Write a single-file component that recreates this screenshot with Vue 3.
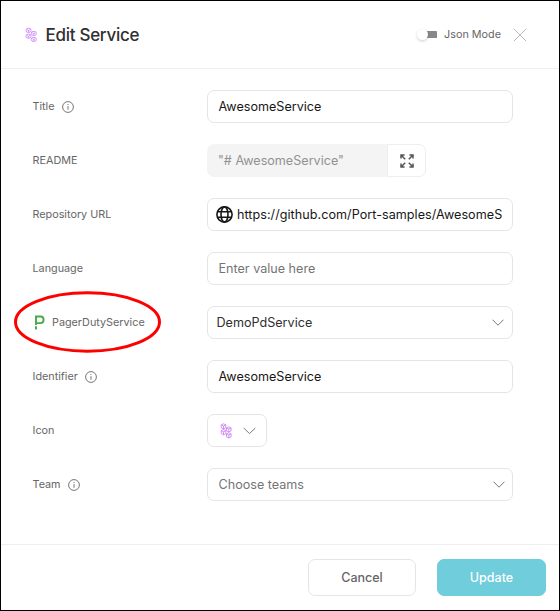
<script setup>
const cubes = [[4, 3.4], [9.3, 6.4], [4, 9.2], [9.3, 12.4]]
const rows = [
  { label: 'Title', info: true, type: 'text', value: 'AwesomeService' },
  { label: 'README', type: 'readme', value: '"# AwesomeService"' },
  { label: 'Repository URL', type: 'url', value: 'https://github.com/Port-samples/AwesomeS' },
  { label: 'Language', type: 'text', value: 'Enter value here', tone: 'placeholder' },
  { label: 'PagerDutyService', pager: true, type: 'select', value: 'DemoPdService', tone: 'chosen' },
  { label: 'Identifier', info: true, type: 'text', value: 'AwesomeService' },
  { label: 'Icon', type: 'icon' },
  { label: 'Team', info: true, type: 'select', value: 'Choose teams', tone: 'muted' },
]
</script>

<template>
  <main class="dialog">
    <header class="header">
      <svg class="service-icon" width="13" height="16" viewBox="0 0 13 16">
        <g v-for="c in cubes" :key="c[0] + '-' + c[1]" :transform="`translate(${c[0] - 0.5} ${c[1]})`">
          <ellipse rx="2.6" ry="2.1" />
          <path d="M-1.4-.7 0 .1 1.4-.7M0 .1V1.5" />
        </g>
      </svg>
      <h1>Edit Service</h1>
      <div class="mode"><span class="toggle"><i></i></span><span class="mode-label">Json Mode</span></div>
      <svg class="close" width="14" height="14" viewBox="0 0 14 14"><path d="m.8.8 12.4 12.4M13.2.8.8 13.2" /></svg>
    </header>

    <section class="form">
      <div v-for="row in rows" :key="row.label" class="row">
        <div class="label" :class="{ pager: row.pager }">
          <svg v-if="row.pager" class="pager-icon" width="11" height="15" viewBox="0 0 11 15">
            <path d="M2 9.900V1.500H6.500Q9.600 1.500 9.600 4.800T6.500 8.100H2M2 11.200V14.500" />
          </svg>
          <span>{{ row.label }}</span>
          <svg v-if="row.info" class="info" width="12" height="12" viewBox="0 0 12 12">
            <circle cx="6" cy="6" r="5.4" /><path d="M6 5.1v3.7" /><circle class="dot" cx="6" cy="3.5" r=".6" />
          </svg>
        </div>

        <div v-if="row.type === 'readme'" class="readme">
          <div class="readme-value">{{ row.value }}</div>
          <div class="expand">
            <svg width="14" height="14" viewBox="0 0 14 14">
              <path d="M5.2 5.2 1.5 1.5M8.8 5.2l3.7-3.7M5.2 8.8l-3.7 3.7M8.8 8.8l3.7 3.7M1 4.6V1h3.6M9.4 1H13v3.6M1 9.4V13h3.6M13 9.4V13H9.4" />
            </svg>
          </div>
        </div>
        <div v-else-if="row.type === 'icon'" class="field icon-field">
          <svg class="service-icon" width="13" height="16" viewBox="0 0 13 16">
            <g v-for="c in cubes" :key="c[0] + '-' + c[1]" :transform="`translate(${c[0] - 0.5} ${c[1]})`">
              <path d="M0-2.6 2.3-1.5V1.4L0 2.6-2.3 1.4V-1.5ZM-2.3-1.5 0-.4 2.3-1.5M0-.4V2.6" />
            </g>
          </svg>
          <svg class="chevron" width="13" height="8" viewBox="0 0 13 8"><path d="m.7 1 5.8 5.6L12.3 1" /></svg>
        </div>
        <div v-else class="field" :class="[row.type, row.tone]">
          <svg v-if="row.type === 'url'" class="globe" width="17" height="17" viewBox="0 0 17 17">
            <circle cx="8.5" cy="8.5" r="7.6" /><ellipse cx="8.5" cy="8.5" rx="3.5" ry="7.6" /><path d="M1.3 5.8h14.4M1.3 11.2h14.4" />
          </svg>
          <span class="value">{{ row.value }}</span>
          <svg v-if="row.type === 'select'" class="chevron" width="12" height="7" viewBox="0 0 12 7"><path d="M.5.7 6 6.2 11.5.7" /></svg>
        </div>
      </div>
    </section>

    <footer class="footer">
      <button class="cancel">Cancel</button>
      <button class="update">Update</button>
    </footer>
    <svg class="highlight" width="150" height="64" viewBox="0 0 150 64"><ellipse cx="74.5" cy="32" rx="72" ry="29.2" /></svg>
  </main>
</template>

<style>
body { margin: 0; background: #fff; }
</style>

<style scoped>
* { box-sizing: border-box; }
.dialog { position: relative; width: 560px; height: 611px; display: flex; flex-direction: column; border: 1px solid #000; background: #fff; font-family: Inter, sans-serif; font-size: 12.6px; color: #171717; overflow: hidden; }
svg { display: block; flex: none; fill: none; }
.header { height: 68px; flex: none; display: flex; align-items: center; padding: 0 32px 0 23.5px; border-bottom: 1px solid #eee; }
.service-icon { stroke: #c778f5; stroke-width: .8; }
h1 { margin: 0 0 0 8px; font-family: Inter, sans-serif; font-size: 17px; font-weight: 500; line-height: 24px; letter-spacing: -.28px; color: #303030; white-space: nowrap; }
.mode { margin-left: auto; display: flex; align-items: center; gap: 7px; }
.toggle { width: 20px; height: 12px; display: flex; align-items: center; background: linear-gradient(#888, #888) right center / 15px 7px no-repeat; border-radius: 4px; }
.toggle i { width: 11px; height: 11px; border-radius: 50%; background: #fff; box-shadow: 0 1px 3px #0003; }
.mode-label { font-size: 10.8px; color: #666; }
.close { margin-left: 12px; stroke: #bbb; stroke-width: 1; }
.form { padding: 21px 46px 0 31px; display: flex; flex-direction: column; gap: 21px; }
.row { display: grid; grid-template-columns: 175px 306px; height: 33px; align-items: center; }
.label { display: flex; align-items: center; gap: 7px; padding-left: .5px; font-size: 10.8px; line-height: 14px; color: #666; white-space: nowrap; }
.label.pager { padding-left: 2px; }
.pager-icon { stroke: #48a947; stroke-width: 1.9; }
.info { stroke: #666; stroke-width: .9; }
.info .dot { fill: #666; stroke: none; }
.field { height: 33px; display: flex; align-items: center; border: 1px solid #e5e5e5; border-radius: 7px; padding: 0 10.5px; white-space: nowrap; }
.url { padding-left: 8px; gap: 4px; }
.url .value { letter-spacing: .04px; }
.placeholder, .muted { color: #757575; }
.chosen { color: #303030; padding-left: 8.5px; padding-right: 8px; }
.muted { padding-right: 7px; }
.select .chevron { margin-left: auto; }
.chevron { stroke: #777; stroke-width: 1; }
.globe { stroke: #171717; stroke-width: 1.6; }
.readme { display: flex; width: 219px; height: 33px; }
.readme-value { width: 180px; padding-left: 11px; line-height: 33px; background: #f4f4f4; border-radius: 7px 0 0 7px; color: #929292; }
.expand { width: 39px; display: flex; align-items: center; justify-content: center; border: 1px solid #eee; border-radius: 0 7px 7px 0; }
.expand svg { stroke: #555; stroke-width: 1.5; }
.icon-field { width: 60px; padding: 0 0 0 12px; gap: 10px; }
.footer { margin-top: auto; height: 66px; flex: none; display: flex; gap: 21px; padding: 14px 13px 0 0; justify-content: flex-end; border-top: 1px solid #eee; }
button { width: 108px; height: 37px; border: 1px solid #e5e5e5; border-radius: 7px; padding: 0; background: #fff; font: 500 12.5px Inter, sans-serif; color: #666; }
.update { width: 109px; background: #6fcddc; border-color: #6fcddc; color: #fff; }
.highlight { position: absolute; left: 12px; top: 289px; }
.highlight ellipse { stroke: #f00; stroke-width: 3; }
</style>
